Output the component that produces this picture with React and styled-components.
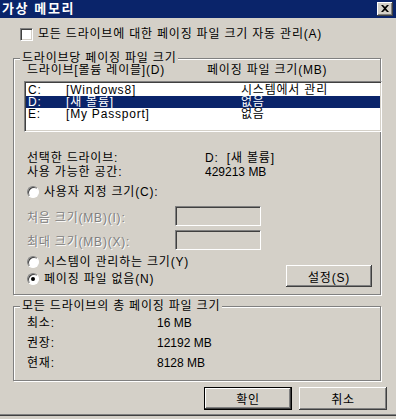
import React from "react";
import styled, { createGlobalStyle } from "styled-components";

/* ======================
   GLOBAL
====================== */

const GlobalStyle = createGlobalStyle`
  html, body {
    margin: 0;
    padding: 0;
    background: #d4d0c8;
  }
  body {
    font-family: "Liberation Sans", "Noto Sans CJK KR", sans-serif;
    font-size: 12px;
    letter-spacing: 0.8px;
    color: #000;
  }
`;

/* ======================
   WINDOW FRAME
====================== */

const Window = styled.div`
  width: 396px;
  height: 416px;
  box-sizing: border-box;
  background: #d4d0c8;
  border-bottom: 1px solid #404040;
  box-shadow: inset 0 -1px 0 #808080;
  display: flex;
  flex-direction: column;
`;

const TitleBar = styled.div`
  height: 18px;
  flex: none;
  background: #0a246a;
  display: flex;
  align-items: center;
  justify-content: space-between;
  padding: 0 3px 0 2px;
`;

const Title = styled.span`
  color: #fff;
  font-weight: bold;
  font-size: 13px;
  letter-spacing: 1.6px;
  line-height: 18px;
`;

const raised = `
  background: #d4d0c8;
  box-shadow: inset -1px -1px 0 #404040, inset 1px 1px 0 #fff,
    inset -2px -2px 0 #808080, inset 2px 2px 0 #d4d0c8;
`;

const sunken = `
  border: 1px solid;
  border-color: #808080 #fff #fff #808080;
  box-shadow: inset 1px 1px 0 #404040, inset -1px -1px 0 #d4d0c8;
`;

const CloseButton = styled.div`
  width: 16px;
  height: 14px;
  box-sizing: border-box;
  ${raised}
  display: flex;
  align-items: center;
  justify-content: center;
  padding-bottom: 1px;
`;

/* ======================
   CONTROLS
====================== */

const CheckRow = styled.div`
  display: flex;
  align-items: center;
  gap: 5px;
  height: 13px;
  margin: 10px 0 0 20px;
  line-height: 13px;
`;

const CheckBox = styled.span`
  width: 13px;
  height: 13px;
  box-sizing: border-box;
  background: #fff;
  ${sunken}
`;

const Group = styled.div`
  position: relative;
  width: 368px;
  height: ${(p) => p.$h}px;
  margin: ${(p) => p.$mt}px 0 0 13px;
  box-sizing: border-box;
  border: 1px solid #808080;
  box-shadow: inset 1px 1px 0 #fff, 1px 1px 0 #fff;
  padding: ${(p) => p.$pad};
  flex: none;
`;

const GroupTitle = styled.span`
  position: absolute;
  top: -7px;
  left: 6px;
  padding: 0 2px;
  background: #d4d0c8;
  line-height: 12px;
  white-space: nowrap;
`;

const Columns = styled.div`
  display: grid;
  grid-template-columns: ${(p) => p.$cols};
  padding-left: 3px;
  line-height: ${(p) => p.$lh || 14}px;
  height: ${(p) => p.$lh || 14}px;
  white-space: nowrap;
`;

const Latin = styled.span`
  letter-spacing: 0;
`;

const ListBox = styled.div`
  width: 358px;
  height: 51px;
  margin-top: 5px;
  box-sizing: border-box;
  background: #fff;
  padding: 2px 1px 1px;
  ${sunken}
`;

const ListRow = styled.div`
  display: grid;
  grid-template-columns: 38px 175px 1fr;
  padding-left: 2px;
  height: 12px;
  line-height: 12px;
  white-space: nowrap;
  background: ${(p) => (p.$selected ? "#0a246a" : "transparent")};
  color: ${(p) => (p.$selected ? "#fff" : "#000")};
`;

const InfoBlock = styled.div`
  margin-top: 19px;
`;

const RadioRow = styled.div`
  display: flex;
  align-items: center;
  gap: 5px;
  height: 14px;
  line-height: 14px;
  padding-left: 3px;
  margin-top: ${(p) => p.$mt || 0}px;
  white-space: nowrap;
`;

const Radio = styled.span`
  position: relative;
  width: 12px;
  height: 12px;
  box-sizing: border-box;
  border-radius: 50%;
  background: #fff;
  border: 1px solid;
  border-color: #808080 #fff #fff #808080;
  box-shadow: inset 1px 1px 0 #404040;

  &::after {
    content: "";
    display: ${(p) => (p.$checked ? "block" : "none")};
    position: absolute;
    left: 3px;
    top: 3px;
    width: 4px;
    height: 4px;
    border-radius: 50%;
    background: #000;
  }
`;

const SizeRows = styled.div`
  display: flex;
  flex-direction: column;
  gap: 4px;
  margin-top: 7px;
`;

const SizeRow = styled.div`
  display: grid;
  grid-template-columns: 148px 86px;
  align-items: center;
  padding-left: 3px;
  height: 20px;
`;

const DisabledLabel = styled.span`
  color: #808080;
  text-shadow: 1px 1px 0 #fff;
  white-space: nowrap;
`;

const TextInput = styled.div`
  height: 20px;
  box-sizing: border-box;
  background: #d4d0c8;
  ${sunken}
`;

const BottomRow = styled.div`
  display: flex;
  justify-content: space-between;
  align-items: flex-end;
  margin-top: 5px;
`;

const RadioColumn = styled.div`
  display: flex;
  flex-direction: column;
  gap: 3px;
  padding-bottom: 1px;
`;

const Button = styled.div`
  width: ${(p) => p.$w}px;
  height: ${(p) => p.$h}px;
  box-sizing: border-box;
  display: flex;
  align-items: center;
  justify-content: center;
  ${raised}
  border: ${(p) => (p.$default ? "1px solid #000" : "none")};
  white-space: nowrap;
`;

const TotalRow = styled.div`
  display: grid;
  grid-template-columns: 130px auto;
  height: 20px;
  line-height: 20px;
`;

const ButtonRow = styled.div`
  display: flex;
  justify-content: flex-end;
  gap: 7px;
  margin-top: 6px;
  padding-right: 9px;
`;

/* ======================
   DATA
====================== */

const drives = [
  { letter: "C:", label: "[Windows8]", size: "시스템에서 관리" },
  { letter: "D:", label: "[새 볼륨]", size: "없음", selected: true },
  { letter: "E:", label: "[My Passport]", size: "없음" },
];

const totals = [
  ["최소:", "16 MB"],
  ["권장:", "12192 MB"],
  ["현재:", "8128 MB"],
];

/* ======================
   APP
====================== */

const App = () => {
  return (
    <>
      <GlobalStyle />
      <Window>
        <TitleBar>
          <Title>가상 메모리</Title>
          <CloseButton>
            <svg width="8" height="7" viewBox="0 0 8 7">
              <path
                d="M0 0h2l2 2 2-2h2L5 3.5 8 7H6L4 5 2 7H0l3-3.5z"
                fill="#000"
              />
            </svg>
          </CloseButton>
        </TitleBar>

        <CheckRow>
          <CheckBox />
          <span>모든 드라이브에 대한 페이징 파일 크기 자동 관리(A)</span>
        </CheckRow>

        <Group $mt={17} $h={237} $pad="5px 8px 0 10px">
          <GroupTitle>드라이브당 페이징 파일 크기</GroupTitle>
          <Columns $cols="180px auto" $lh={12}>
            <span>드라이브[볼륨 레이블](D)</span>
            <span>페이징 파일 크기(MB)</span>
          </Columns>

          <ListBox>
            {drives.map((d) => (
              <ListRow key={d.letter} $selected={d.selected}>
                <span>{d.letter}</span>
                <span>{d.label}</span>
                <span>{d.size}</span>
              </ListRow>
            ))}
          </ListBox>

          <InfoBlock>
            <Columns $cols="178px auto">
              <span>선택한 드라이브:</span>
              <span>D:&nbsp;&nbsp;[새 볼륨]</span>
            </Columns>
            <Columns $cols="178px auto">
              <span>사용 가능한 공간:</span>
              <Latin>429213 MB</Latin>
            </Columns>
          </InfoBlock>

          <RadioRow $mt={6}>
            <Radio />
            <span>사용자 지정 크기(C):</span>
          </RadioRow>

          <SizeRows>
            <SizeRow>
              <DisabledLabel>처음 크기(MB)(I):</DisabledLabel>
              <TextInput />
            </SizeRow>
            <SizeRow>
              <DisabledLabel>최대 크기(MB)(X):</DisabledLabel>
              <TextInput />
            </SizeRow>
          </SizeRows>

          <BottomRow>
            <RadioColumn>
              <RadioRow>
                <Radio />
                <span>시스템이 관리하는 크기(Y)</span>
              </RadioRow>
              <RadioRow>
                <Radio $checked />
                <span>페이징 파일 없음(N)</span>
              </RadioRow>
            </RadioColumn>
            <Button $w={86} $h={22}>설정(S)</Button>
          </BottomRow>
        </Group>

        <Group $mt={11} $h={75} $pad="6px 0 0 13px">
          <GroupTitle>모든 드라이브의 총 페이징 파일 크기</GroupTitle>
          {totals.map(([label, value]) => (
            <TotalRow key={label}>
              <span>{label}</span>
              <Latin>{value}</Latin>
            </TotalRow>
          ))}
        </Group>

        <ButtonRow>
          <Button $w={88} $h={23} $default>
            확인
          </Button>
          <Button $w={88} $h={23}>
            취소
          </Button>
        </ButtonRow>
      </Window>
    </>
  );
};

export default App;
